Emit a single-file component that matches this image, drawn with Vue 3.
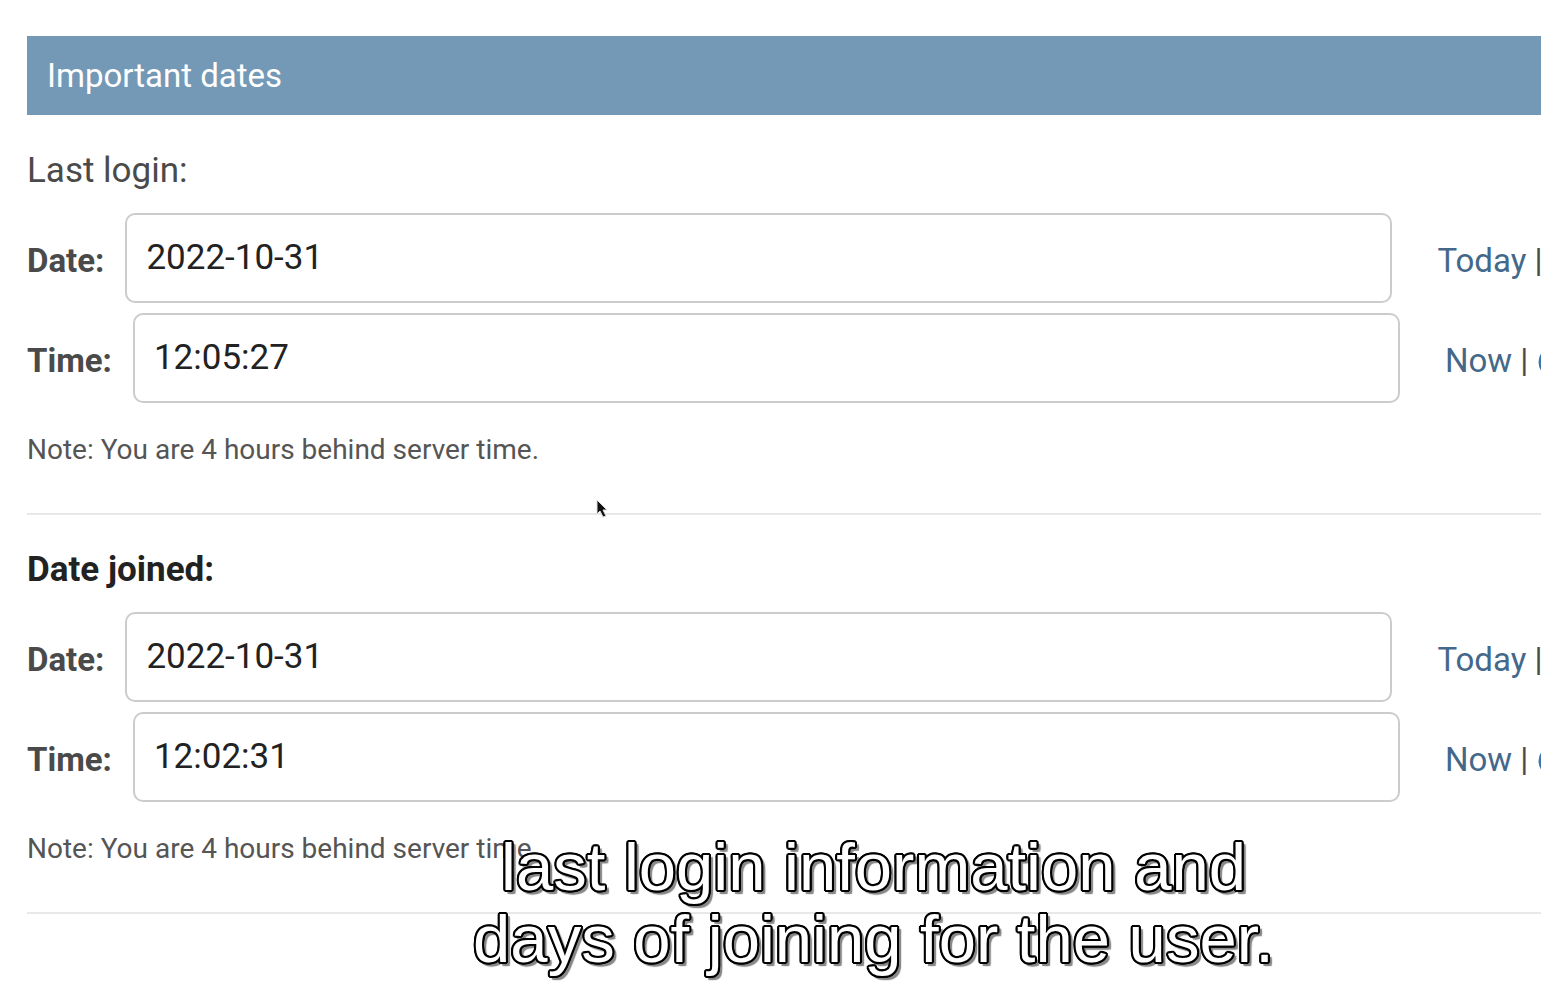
<script setup>
import { reactive } from 'vue'
const groups = reactive([
  { id: 'login', title: 'Last login:', required: false, date: '2022-10-31', time: '12:05:27' },
  { id: 'joined', title: 'Date joined:', required: true, date: '2022-10-31', time: '12:02:31' },
])
</script>

<template>
  <main class="page">
    <section class="module">
      <h2 class="heading">Important dates</h2>
      <fieldset v-for="g in groups" :key="g.id" class="group">
        <legend class="title" :class="{ required: g.required }">{{ g.title }}</legend>
        <div class="row">
          <label class="name" :for="g.id + '-date'">Date:</label>
          <input :id="g.id + '-date'" v-model="g.date" class="field" type="text" />
          <span class="shortcuts"><a href="#">Today</a> |</span>
        </div>
        <div class="row">
          <label class="name" :for="g.id + '-time'">Time:</label>
          <input :id="g.id + '-time'" v-model="g.time" class="field" type="text" />
          <span class="shortcuts"><a href="#">Now</a> |</span>
          <a class="clock" href="#" aria-label="Choose a time">
            <svg viewBox="0 0 32 32" width="32" height="32">
              <circle cx="16" cy="16" r="13" fill="none" stroke="#3d76ad" stroke-width="5" />
              <path d="M16 8v9l6 4" fill="none" stroke="#3d76ad" stroke-width="3" />
            </svg>
          </a>
        </div>
        <p class="note">Note: You are 4 hours behind server time.</p>
      </fieldset>
    </section>
    <svg class="cursor" viewBox="0 0 14 22" width="14" height="22" aria-hidden="true">
      <path d="M2 2v14l3-3 3 6 3-1-3-6h4z" fill="#111" stroke="#ddd" stroke-width="1" />
    </svg>
    <p class="caption">last login information and<br />days of joining for the user.</p>
  </main>
</template>

<style>
body { margin: 0; background: #fff; }
</style>
<style scoped>
.page { position: relative; min-height: 100vh; box-sizing: border-box; padding: 36px 0 0 27px; overflow: hidden; font-family: Roboto, sans-serif; color: #4a4a4a; }
.heading { margin: 0 0 1px; padding-left: 20px; background: #7499b6; color: #fff; font-size: 33px; line-height: 79px; font-weight: 400; }
.group { margin: 0; padding: 0 0 43px; border: 0; border-bottom: 2px solid #e8e8e8; min-width: 0; }
.title { padding: 32px 0 19px; font-size: 35px; line-height: 46px; }
.required { font-weight: 700; color: #222; }
.row { display: flex; margin-bottom: 10px; white-space: nowrap; }
.name { font-size: 33px; line-height: 90px; padding-top: 3px; margin: 0 21px -3px 0; font-weight: 700; }
.field { flex: none; width: calc(100vw - 274px); box-sizing: border-box; height: 90px; padding: 0 19px 2px; border: 2px solid #ccc; border-radius: 10px; background: #fff; color: #222; font: 35px Roboto, sans-serif; }
.shortcuts { margin: 0 0 -3px 45px; padding-top: 3px; font-size: 33px; line-height: 90px; }
.shortcuts a { color: #44688a; text-decoration: none; }
.clock { display: flex; align-items: center; margin: 4px 0 -4px 10px; }
.note { margin: 0; padding-top: 17px; font-size: 28px; line-height: 40px; color: #555; }
.cursor { position: absolute; left: 595px; top: 498px; }
.caption {
  position: absolute; left: 206px; right: 0; top: 831px; margin: 0; text-align: center;
  font: 67px/72px "Liberation Sans", Arial, sans-serif; color: #fff;
  text-shadow:
    2px 0 #000, -2px 0 #000, 0 2px #000, 0 -2px #000,
    2px 1px #000, 2px -1px #000, -2px 1px #000, -2px -1px #000,
    1px 2px #000, 1px -2px #000, -1px 2px #000, -1px -2px #000,
    4px 4px 1px #888, 4px 2px 1px #888, 2px 4px 1px #888;
}
</style>
